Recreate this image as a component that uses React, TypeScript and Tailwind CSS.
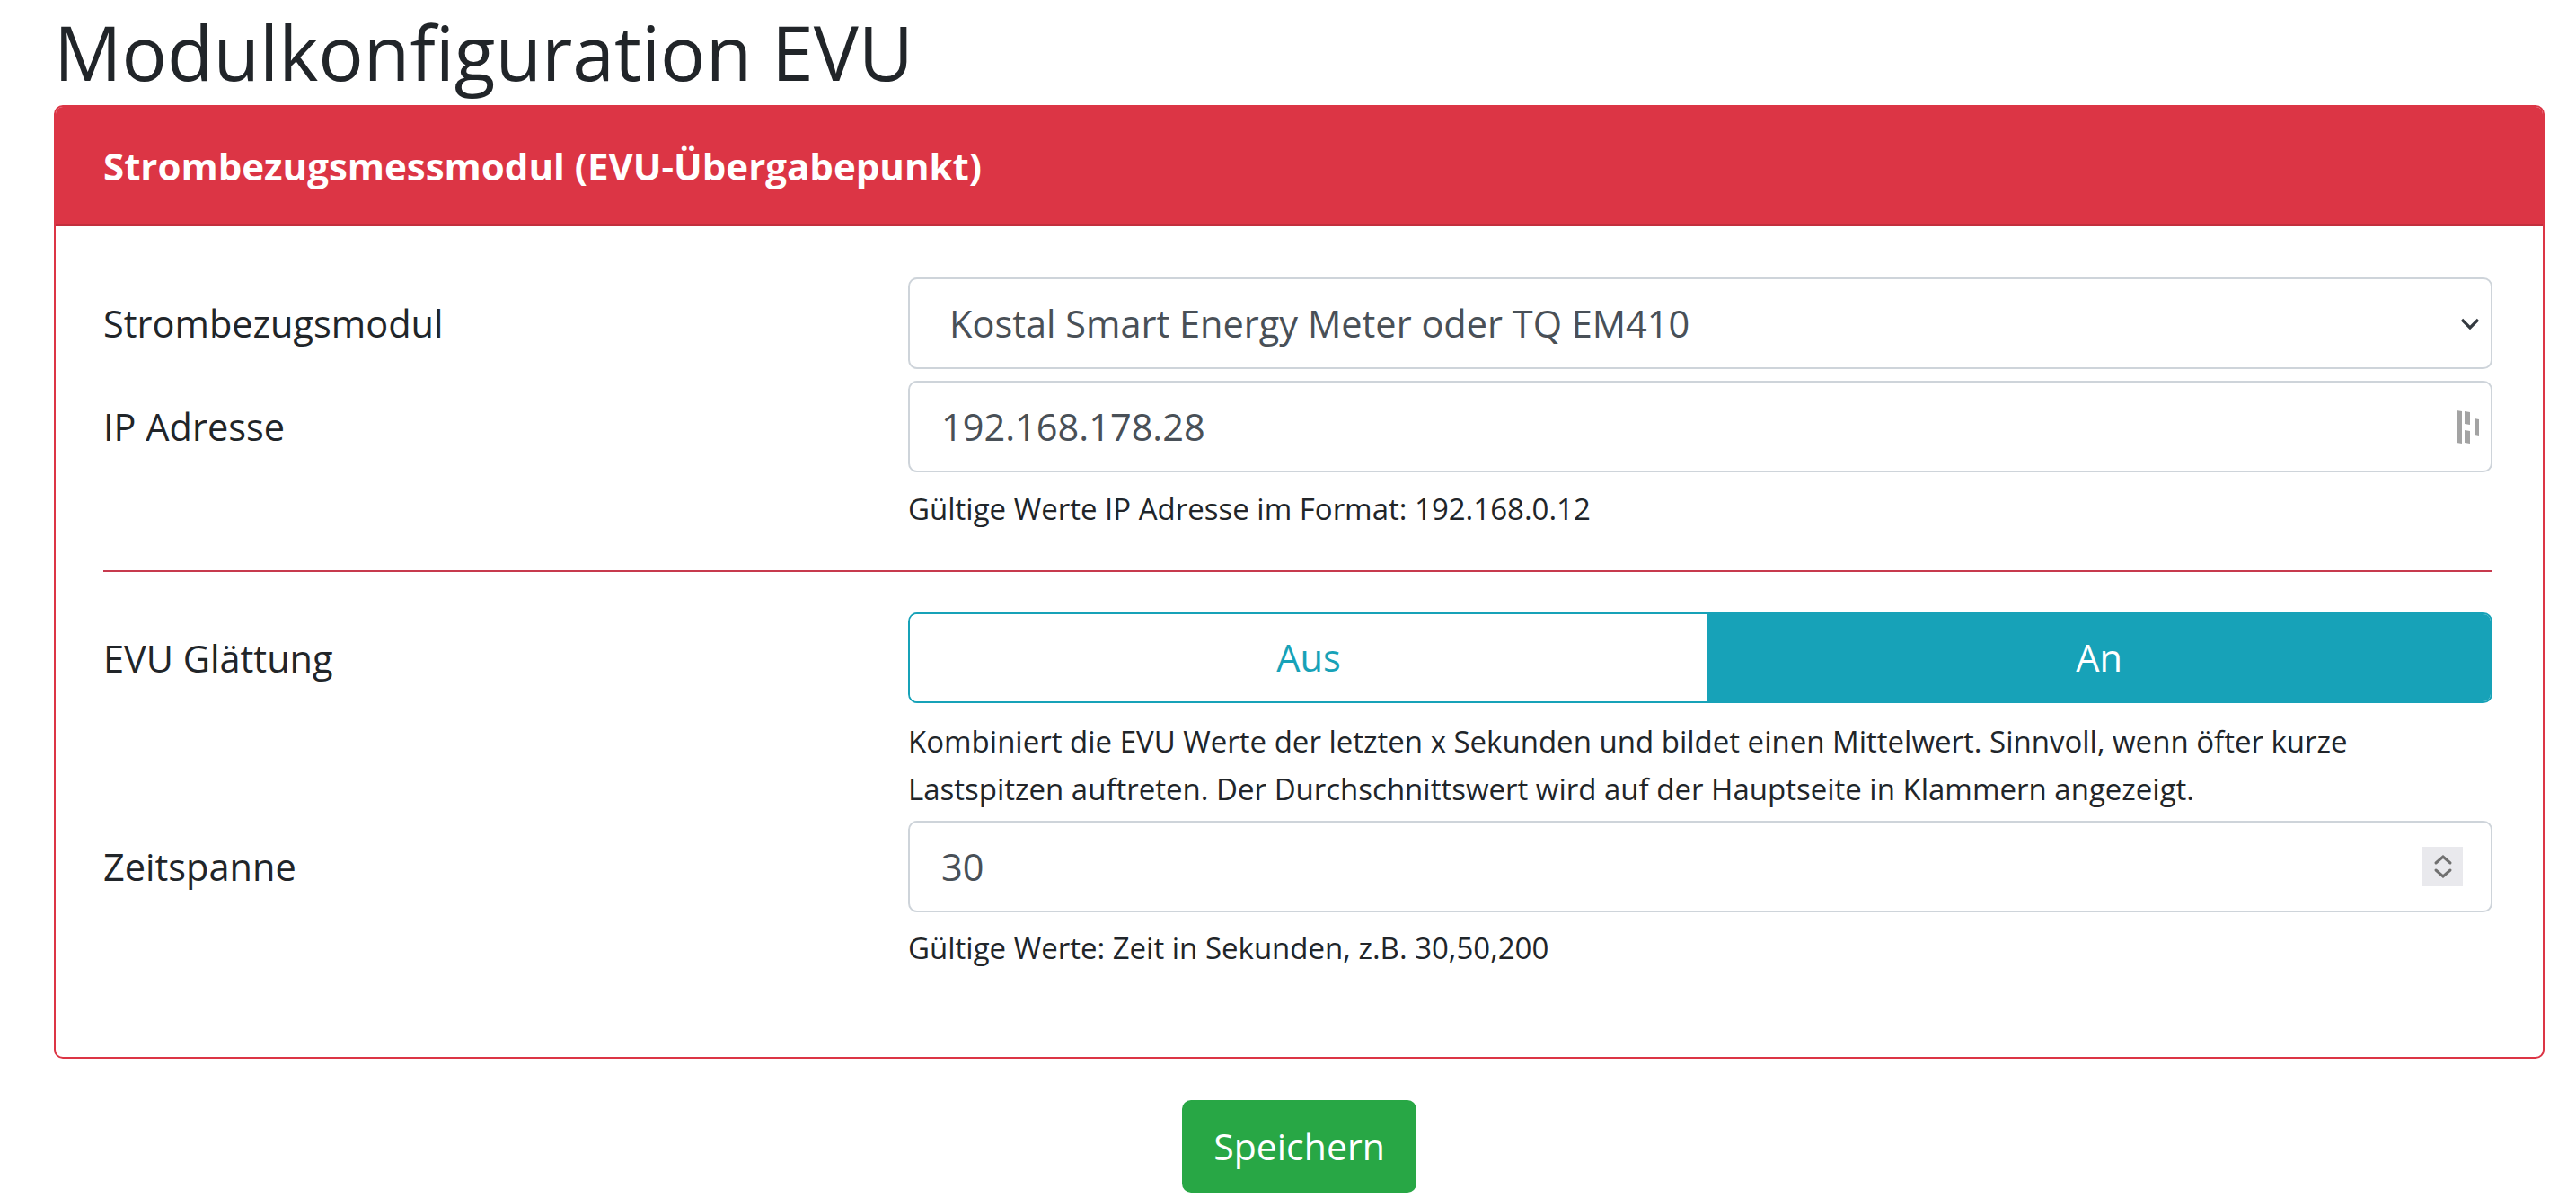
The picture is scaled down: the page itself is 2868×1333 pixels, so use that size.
import React from "react";

const Label = ({ children }: { children: React.ReactNode }) => (
  <div className="h-[102px] flex items-center text-[41.5px] text-[#212529]">
    {children}
  </div>
);

const Help = ({ children, className = "" }: { children: React.ReactNode; className?: string }) => (
  <div className={"text-[33px] leading-[48px] text-[#212529] " + className}>{children}</div>
);

const PasswordIcon = () => (
  <svg width="26" height="37" viewBox="0 0 26 37" className="shrink-0">
    <polygon points="0,0 6,1 6,37 0,36" fill="#a3a3a3" />
    <polygon points="9,1 15,2 15,16 9,15" fill="#a3a3a3" />
    <polygon points="9,22 15,23 15,37 9,36" fill="#a3a3a3" />
    <polygon points="20,9 25,10 25,28 20,27" fill="#a3a3a3" />
  </svg>
);

const Spinner = () => (
  <div className="w-[45px] h-[44px] bg-[#e9e9ed] flex items-center justify-center">
    <svg width="22" height="30" viewBox="0 0 22 30">
      <path d="M3 11 L11 4 L19 11" fill="none" stroke="#707070" strokeWidth="3" strokeLinecap="round" />
      <path d="M3 19 L11 26 L19 19" fill="none" stroke="#707070" strokeWidth="3" strokeLinecap="round" />
    </svg>
  </div>
);

export default function App() {
  return (
    <div className="min-h-screen bg-white pl-[60px] font-['Open_Sans',sans-serif]">
      <h1 className="leading-[115px] mb-[2px] text-[84px] font-normal text-[#212529]">
        Modulkonfiguration EVU
      </h1>

      <div className="w-[2773px] border-2 border-[#dc3545] rounded-[10px]">
        <div className="h-[133px] bg-[#dc3545] border-b-2 border-[#c22f3d] rounded-t-[8px] pl-[53px] flex items-center text-white font-bold text-[42px]">
          Strombezugsmessmodul (EVU-Übergabepunkt)
        </div>

        <div className="pl-[53px] pr-[56px] pt-[57px] pb-[97px]">
          <div className="grid grid-cols-[896px_1fr]">
            <Label>Strombezugsmodul</Label>
            <div className="h-[102px] border-2 border-[#ced4da] rounded-[10px] pl-[44px] pr-[12px] flex items-center justify-between text-[41.5px] text-[#495057]">
              <span>Kostal Smart Energy Meter oder TQ EM410</span>
              <svg width="22" height="13" viewBox="0 0 22 13">
                <path d="M2 2 L11 11 L20 2" fill="none" stroke="#343a40" strokeWidth="3.2" />
              </svg>
            </div>
          </div>

          <div className="grid grid-cols-[896px_1fr] mt-[13px]">
            <Label>IP Adresse</Label>
            <div>
              <div className="h-[102px] border-2 border-[#ced4da] rounded-[10px] pl-[35px] pr-[12px] flex items-center justify-between text-[41.5px] text-[#495057]">
                <span>192.168.178.28</span>
                <PasswordIcon />
              </div>
              <Help className="mt-[17px]">Gültige Werte IP Adresse im Format: 192.168.0.12</Help>
            </div>
          </div>

          <div className="mt-[44px] h-[2px] bg-[#c73a4e]" />

          <div className="grid grid-cols-[896px_1fr] mt-[45px]">
            <Label>EVU Glättung</Label>
            <div>
              <div className="h-[101px] flex border-2 border-[#17a2b8] rounded-[10px] overflow-hidden text-[41.5px]">
                <div className="w-[888px] bg-white text-[#17a2b8] flex items-center justify-center">Aus</div>
                <div className="flex-1 bg-[#17a2b8] text-white flex items-center justify-center">An</div>
              </div>
              <div className="mt-[16px] text-[33px] leading-[53px] text-[#212529]">
                <div>
                  Kombiniert die EVU Werte der letzten x Sekunden und bildet einen Mittelwert. Sinnvoll, wenn öfter kurze
                </div>
                <div>Lastspitzen auftreten. Der Durchschnittswert wird auf der Hauptseite in Klammern angezeigt.</div>
              </div>
            </div>
          </div>

          <div className="grid grid-cols-[896px_1fr] mt-[9px]">
            <Label>Zeitspanne</Label>
            <div>
              <div className="h-[102px] border-2 border-[#ced4da] rounded-[10px] pl-[35px] pr-[31px] flex items-center justify-between text-[41.5px] text-[#495057]">
                <span>30</span>
                <Spinner />
              </div>
              <Help className="mt-[16px]">Gültige Werte: Zeit in Sekunden, z.B. 30,50,200</Help>
            </div>
          </div>
        </div>
      </div>

      <div className="w-[2773px] flex justify-center mt-[46px]">
        <button className="w-[261px] h-[103px] bg-[#28a745] rounded-[10px] text-white text-[41px] flex items-center justify-center">
          Speichern
        </button>
      </div>
    </div>
  );
}
